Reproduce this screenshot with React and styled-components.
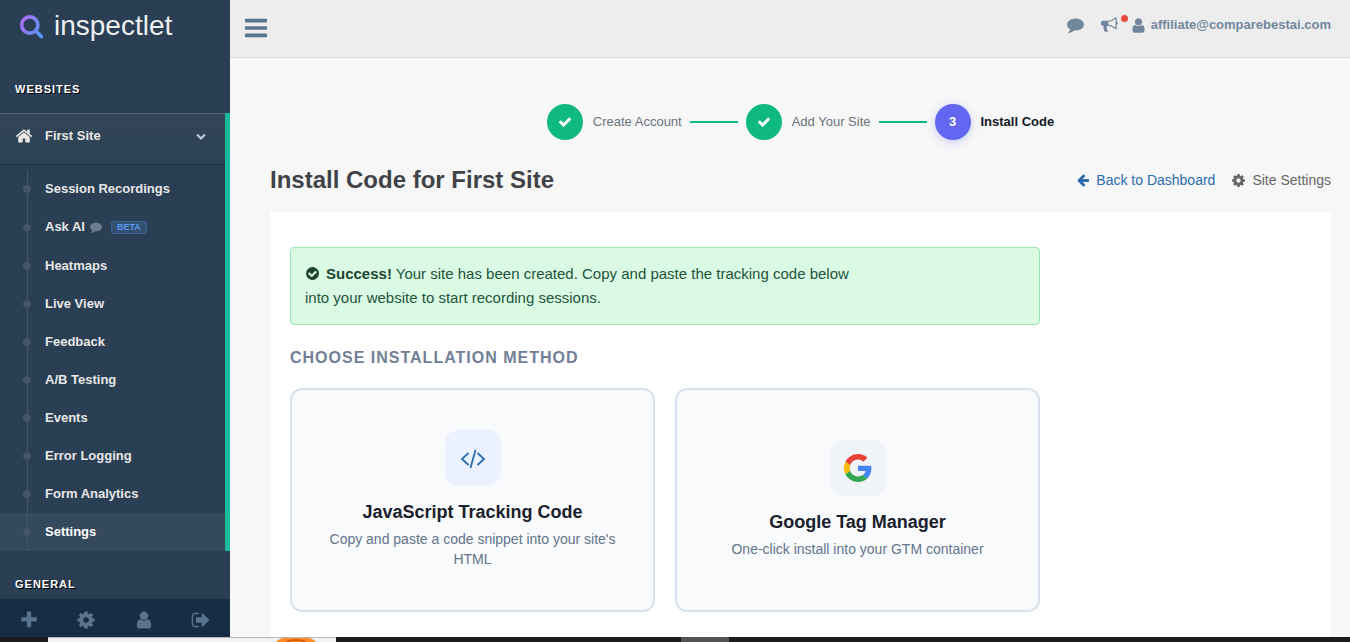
import React from 'react'
import { styled, createGlobalStyle } from 'styled-components'

const GlobalStyle = createGlobalStyle`
  *{
    box-sizing: border-box;
    margin: 0;
    padding: 0;
  }
  body{
    font-family: "Liberation Sans", Arial, sans-serif;
    font-size: 14px;
    line-height: 20px;
    background: #f7f7f7;
    color: #333;
  }
  a{
    color: inherit;
    text-decoration: none;
  }
  ul{
    list-style: none;
  }
  button{
    font: inherit;
    color: inherit;
    border: 0;
    background: none;
    cursor: pointer;
  }
`

const icons = {
  bars: 'M1664 1344v128q0 26-19 45t-45 19h-1408q-26 0-45-19t-19-45v-128q0-26 19-45t45-19h1408q26 0 45 19t19 45zm0-512v128q0 26-19 45t-45 19h-1408q-26 0-45-19t-19-45v-128q0-26 19-45t45-19h1408q26 0 45 19t19 45zm0-512v128q0 26-19 45t-45 19h-1408q-26 0-45-19t-19-45v-128q0-26 19-45t45-19h1408q26 0 45 19t19 45z',
  home: 'M1472 992v480q0 26-19 45t-45 19h-384v-384h-256v384h-384q-26 0-45-19t-19-45v-480q0-1 .5-3t.5-3l575-474 575 474q1 2 1 6zm223-69l-62 74q-8 9-21 11h-3q-13 0-21-7l-692-577-692 577q-12 8-24 7-13-2-21-11l-62-74q-8-10-7-23.5t11-21.5l719-599q32-26 76-26t76 26l244 204v-195q0-14 9-23t23-9h192q14 0 23 9t9 23v408l219 182q10 8 11 21.5t-7 23.5z',
  down: 'M1683 808l-742 741q-19 19-45 19t-45-19l-742-741q-19-19-19-45.5t19-45.5l166-165q19-19 45-19t45 19l531 531 531-531q19-19 45-19t45 19l166 165q19 19 19 45.5t-19 45.5z',
  comment: 'M1792 896q0 174-120 321.5t-326 233-450 85.5q-70 0-145-8-198 175-460 242-49 14-114 22-17 2-30.5-9t-17.5-29v-1q-3-4-.5-12t2-10 4.5-9.5l6-9 7-8.5 8-9q7-8 31-34.5t34.5-38 31-39.5 32.5-51 27-59 26-76q-157-89-247.5-220t-90.5-281q0-130 71-248.5t191-204.5 286-136.5 348-50.5q244 0 450 85.5t326 233 120 321.5z',
  bullhorn: 'M1664 640q53 0 90.5 37.5t37.5 90.5-37.5 90.5-90.5 37.5v384q0 52-38 90t-90 38q-417-347-812-380-58 19-91 66t-31 100.5 40 92.5q-20 33-23 65.5t6 58 33.5 55 48 50 61.5 50.5q-29 58-111.5 83t-168.5 11.5-132-55.5q-7-23-29.5-87.5t-32-94.5-23-89-15-101 3.5-98.5 22-110.5h-122q-66 0-113-47t-47-113v-192q0-66 47-113t113-47h480q435 0 896-384 52 0 90 38t38 90v384zm-128 604v-954q-394 302-768 343v270q377 42 768 341z',
  user: 'M1536 1399q0 109-62.5 187t-150.5 78h-854q-88 0-150.5-78t-62.5-187q0-85 8.5-160.5t31.5-152 58.5-131 94-89 134.5-34.5q131 128 313 128t313-128q76 0 134.5 34.5t94 89 58.5 131 31.5 152 8.5 160.5zm-256-887q0 159-112.5 271.5t-271.5 112.5-271.5-112.5-112.5-271.5 112.5-271.5 271.5-112.5 271.5 112.5 112.5 271.5z',
  cog: 'M1152 896q0-106-75-181t-181-75-181 75-75 181 75 181 181 75 181-75 75-181zm512-109v222q0 12-8 23t-20 13l-185 28q-19 54-39 91 35 50 107 138 10 12 10 25t-9 23q-27 37-99 108t-94 71q-12 0-26-9l-138-108q-44 23-91 38-16 136-29 186-7 28-36 28h-222q-14 0-24.5-8.5t-11.5-21.5l-28-184q-49-16-90-37l-141 107q-10 9-25 9-14 0-25-11-126-114-165-168-7-10-7-23 0-12 8-23 15-21 51-66.5t54-70.5q-27-50-41-99l-183-27q-13-2-21-12.5t-8-23.5v-222q0-12 8-23t19-13l186-28q14-46 39-92-40-57-107-138-10-12-10-24 0-10 9-23 26-36 98.5-107.5t94.5-71.5q13 0 26 10l138 107q44-23 91-38 16-136 29-186 7-28 36-28h222q14 0 24.5 8.5t11.5 21.5l28 184q49 16 90 37l142-107q9-9 24-9 13 0 25 10 129 119 165 170 7 8 7 22 0 12-8 23-15 21-51 66.5t-54 70.5q26 50 41 98l183 28q13 2 21 12.5t8 23.5z',
  plus: 'M1600 736v192q0 40-28 68t-68 28h-416v416q0 40-28 68t-68 28h-192q-40 0-68-28t-28-68v-416h-416q-40 0-68-28t-28-68v-192q0-40 28-68t68-28h416v-416q0-40 28-68t68-28h192q40 0 68 28t28 68v416h416q40 0 68 28t28 68z',
  signout: 'M704 1440q0 4 1 20t.5 26.5-3 23.5-10 19.5-20.5 6.5h-320q-119 0-203.5-84.5t-84.5-203.5v-704q0-119 84.5-203.5t203.5-84.5h320q13 0 22.5 9.5t9.5 22.5q0 4 1 20t.5 26.5-3 23.5-10 19.5-20.5 6.5h-320q-66 0-113 47t-47 113v704q0 66 47 113t113 47h312l11.5 1 11.5 3 8 5.5 7 9 2 13.5zm928-544q0 26-19 45l-544 544q-19 19-45 19t-45-19-19-45v-288h-448q-26 0-45-19t-19-45v-384q0-26 19-45t45-19h448v-288q0-26 19-45t45-19 45 19l544 544q19 19 19 45z',
  check: 'M1671 566q0 40-28 68l-724 724-136 136q-28 28-68 28t-68-28l-136-136-362-362q-28-28-28-68t28-68l136-136q28-28 68-28t68 28l294 295 656-657q28-28 68-28t68 28l136 136q28 28 28 68z',
  checkCircle: 'M1412 734q0-28-18-46l-91-90q-19-19-45-19t-45 19l-408 407-226-226q-19-19-45-19t-45 19l-91 90q-18 18-18 46 0 27 18 45l362 362q19 19 45 19 27 0 46-19l543-543q18-18 18-45zm252 162q0 209-103 385.5t-279.5 279.5-385.5 103-385.5-103-279.5-279.5-103-385.5 103-385.5 279.5-279.5 385.5-103 385.5 103 279.5 279.5 103 385.5z',
  back: 'M1664 896v128q0 53-32.5 90.5t-84.5 37.5h-704l293 294q38 36 38 90t-38 90l-75 76q-37 37-90 37-52 0-91-37l-651-652q-37-37-37-90 0-52 37-91l651-650q38-38 91-38 52 0 90 38l75 74q38 38 38 91t-38 91l-293 293h704q52 0 84.5 37.5t32.5 90.5z',
}

const Icon = ({ name, size = 14 }) => (
  <svg width={size} height={size} viewBox='0 0 1792 1792' fill='currentColor' aria-hidden='true'>
    <path d={icons[name]} />
  </svg>
)

const Screen = styled.div`
  height: 100vh;
  display: grid;
  grid-template-rows: minmax(0, 1fr) 5px;
`

const Layout = styled.div`
  display: grid;
  grid-template-columns: 230px minmax(0, 1fr);
  overflow: hidden;
`

const SidebarStyled = styled.aside`
  display: flex;
  flex-direction: column;
  min-height: 0;
  background: #2a3f54;
  color: #e6e6e6;
`

const Logo = styled.a`
  display: flex;
  align-items: center;
  gap: 10px;
  height: 52px;
  margin-bottom: 4px;
  padding: 0 19px;
  font-size: 28px;
  line-height: 52px;
  color: #ecf0f1;
  flex-shrink: 0;
`

const Menu = styled.nav`
  flex: 1;
  min-height: 0;
  overflow: hidden;
`

const MenuHeading = styled.h3`
  padding: 23px 15px 14px;
  font-size: 11px;
  line-height: 20px;
  letter-spacing: 1px;
  text-transform: uppercase;
  color: #fff;
  text-shadow: 1px 1px #000;
`

const Site = styled.div`
  border-right: 5px solid #1abb9c;
`

const SiteButton = styled.button`
  display: flex;
  align-items: center;
  gap: 12px;
  width: 100%;
  height: 52px;
  padding: 0 19px 6px 15px;
  font-size: 13px;
  font-weight: bold;
  text-align: left;
  color: #e7e7e7;
  background: linear-gradient(#334556, #2c4257);
  border-top: 1px solid #52647a;
  border-bottom: 1px solid #1c2a3a;
  span{
    flex: 1;
  }
  svg:last-child{
    color: #c4cfda;
  }
`

const SubMenu = styled.ul`
  padding-top: 5px;
`

const SubItem = styled.li`
  display: flex;
  align-items: stretch;
  height: ${(props) => (props.$tall ? 39 : 38)}px;
  background: ${(props) => (props.$active ? '#35495d' : 'transparent')};
  /* timeline line with its dot */
  &::before{
    content: '';
    width: 8px;
    margin-left: 23px;
    background:
      radial-gradient(circle closest-side, #425668 90%, transparent),
      linear-gradient(#425668, #425668) center / 1px 100% no-repeat;
  }
  a{
    display: flex;
    align-items: center;
    gap: 5px;
    padding-left: 14px;
    padding-bottom: ${(props) => (props.$tall ? 2 : 0)}px;
    font-size: 13px;
    font-weight: bold;
    color: ${(props) => (props.$active ? '#fff' : '#e7e7e7')};
  }
  svg{
    color: #6b7e92;
  }
`

const Beta = styled.span`
  margin: 2px 0 0 4px;
  padding: 0 5px;
  border: 1px solid #3b6297;
  border-radius: 2px;
  background: #34506f;
  font-size: 9px;
  line-height: 11px;
  color: #5b9cf2;
`

const SidebarFooter = styled.div`
  display: grid;
  grid-template-columns: repeat(4, 1fr);
  height: 38px;
  flex-shrink: 0;
  background: #172d44;
  button{
    display: flex;
    align-items: center;
    justify-content: center;
    padding-top: 4px;
    color: #5a738e;
  }
`

const Page = styled.div`
  min-width: 0;
  display: flex;
  flex-direction: column;
`

const TopBar = styled.header`
  display: flex;
  align-items: center;
  justify-content: space-between;
  height: 58px;
  padding: 0 19px 2px 13px;
  flex-shrink: 0;
  background: #ededed;
  border-bottom: 1px solid #d9dee4;
  color: #5a738e;
`

const MenuToggle = styled.button`
  display: flex;
`

const TopLinks = styled.div`
  display: flex;
  align-items: center;
  gap: 17px;
  height: 48px;
  align-self: flex-start;
  color: #73879c;
`

const TopButton = styled.button`
  display: flex;
  position: relative;
`

const Dot = styled.span`
  position: absolute;
  top: -1px;
  right: -10px;
  width: 7px;
  height: 7px;
  border-radius: 50%;
  background: #e74c3c;
`

const Account = styled.a`
  display: flex;
  align-items: center;
  gap: 4px;
  margin-left: -5px;
  padding-top: 2px;
  font-size: 13px;
  font-weight: bold;
`

const Main = styled.main`
  flex: 1;
  display: flex;
  flex-direction: column;
  padding: 46px 19px 0 40px;
`

const Stepper = styled.ol`
  display: flex;
  align-items: center;
  justify-content: center;
  gap: 8px;
  list-style: none;
`

const Step = styled.li`
  display: flex;
  align-items: center;
  gap: 10px;
  font-size: 13px;
  font-weight: ${(props) => (props.$current ? 'bold' : 'normal')};
  color: ${(props) => (props.$current ? '#111827' : '#6b7280')};
`

const StepCircle = styled.span`
  display: flex;
  align-items: center;
  justify-content: center;
  width: 36px;
  height: 36px;
  border-radius: 50%;
  color: #fff;
  background: ${(props) => (props.$current ? '#6366f1' : '#10b981')};
  box-shadow: ${(props) => (props.$current ? '0 2px 8px rgba(99,102,241,0.3)' : 'none')};
`

const StepLine = styled.li`
  width: 48px;
  height: 2px;
  background: #10b981;
`

const TitleRow = styled.div`
  display: flex;
  align-items: center;
  justify-content: space-between;
  padding: 24px 0 16px;
  h1{
    font-size: 24px;
    line-height: 32px;
    color: #3f4348;
  }
`

const PageLinks = styled.div`
  display: flex;
  gap: 16px;
`

const PageLink = styled.a`
  display: flex;
  align-items: center;
  gap: 6px;
  color: ${(props) => (props.$primary ? '#2b6cb0' : '#666')};
`

const Panel = styled.section`
  flex: 1;
  padding: 35px 20px 25px;
  background: #fff;
`

const Content = styled.div`
  max-width: 750px;
`

const Alert = styled.div`
  padding: 14px;
  border: 1px solid #9ae6b4;
  border-radius: 4px;
  background: #dbfae3;
  font-size: 15px;
  line-height: 24px;
  color: #22543d;
  p{
    max-width: 570px;
  }
  svg{
    margin-right: 6px;
    vertical-align: -2px;
    color: #1c4532;
  }
  strong{
    color: #1c4532;
  }
`

const SectionTitle = styled.h2`
  padding: 23px 0 20px;
  font-size: 16px;
  line-height: 20px;
  letter-spacing: 1px;
  text-transform: uppercase;
  color: #718096;
`

const Methods = styled.div`
  display: grid;
  grid-template-columns: 1fr 1fr;
  gap: 20px;
`

const MethodCard = styled.button`
  display: flex;
  flex-direction: column;
  align-items: center;
  justify-content: center;
  padding: 40px 30px;
  border: 2px solid #d9e2ec;
  border-radius: 12px;
  background: #f8fafc;
  h3{
    margin: 15px 0 6px;
    font-size: 18px;
    line-height: 22px;
    color: #1a202c;
  }
  p{
    padding-bottom: 1px;
    color: #64748b;
  }
`

const MethodIcon = styled.span`
  display: flex;
  align-items: center;
  justify-content: center;
  width: 56px;
  height: 56px;
  border-radius: 14px;
  background: ${(props) => props.$tint};
`

const Taskbar = styled.div`
  display: grid;
  grid-template-columns: 48px 288px 345px 48px 1fr;
  background: #1c1c1c;
  overflow: hidden;
`

const SearchBox = styled.div`
  padding-left: 223px;
  border-top: 1px solid #b8b8b8;
  background: #f2f2f2;
  svg{
    display: block;
  }
`

const ActiveApp = styled.div`
  grid-column: 4;
  background: #535353;
`

const subItems = ['Session Recordings', 'Ask AI', 'Heatmaps', 'Live View', 'Feedback', 'A/B Testing', 'Events', 'Error Logging', 'Form Analytics', 'Settings']

const footerItems = [
  { icon: 'plus', label: 'Add site' },
  { icon: 'cog', label: 'Settings' },
  { icon: 'user', label: 'Profile' },
  { icon: 'signout', label: 'Sign out' },
]

const LogoMark = () => (
  <svg width='25' height='25' viewBox='0 0 25 25' fill='none' stroke='url(#mark)' aria-hidden='true'>
    <defs>
      <linearGradient id='mark' x1='0' y1='6' x2='25' y2='19' gradientUnits='userSpaceOnUse'>
        <stop offset='0' stopColor='#b26bf5' />
        <stop offset='1' stopColor='#4f9cf9' />
      </linearGradient>
    </defs>
    <circle cx='10.8' cy='11' r='8.1' strokeWidth='3.6' />
    <path d='M17 17l5.200 5.500' strokeWidth='3.800' strokeLinecap='round' />
  </svg>
)

const CodeMark = () => (
  <svg width='26' height='20' viewBox='0 0 26 20' fill='none' stroke='#2b6cb0' strokeWidth='1.800' aria-hidden='true'>
    <path d='M8.500 5L2 11l6.500 6M17.500 5l6.500 6-6.500 6M15.500 2l-5 18' />
  </svg>
)

const GoogleMark = () => (
  <svg width='28' height='28' viewBox='0 0 48 48' aria-hidden='true'>
    <path fill='#EA4335' d='M24 9.500c3.540 0 6.710 1.220 9.210 3.600l6.850-6.850C35.900 2.380 30.470 0 24 0 14.620 0 6.510 5.380 2.560 13.220l7.980 6.190C12.430 13.720 17.740 9.500 24 9.500z' />
    <path fill='#4285F4' d='M46.980 24.550c0-1.570-.150-3.090-.380-4.550H24v9.020h12.940c-.580 2.960-2.260 5.480-4.780 7.180l7.730 6c4.510-4.180 7.090-10.360 7.090-17.650z' />
    <path fill='#FBBC05' d='M10.530 28.590c-.480-1.450-.760-2.990-.760-4.590s.270-3.140.760-4.590l-7.980-6.190C.920 16.460 0 20.120 0 24c0 3.880.920 7.540 2.560 10.780l7.970-6.190z' />
    <path fill='#34A853' d='M24 48c6.480 0 11.930-2.130 15.890-5.810l-7.730-6c-2.150 1.450-4.920 2.300-8.160 2.300-6.260 0-11.570-4.220-13.470-9.910l-7.980 6.190C6.510 42.620 14.620 48 24 48z' />
  </svg>
)

const Sidebar = () => (
  <SidebarStyled>
    <Logo href='#'>
      <LogoMark />
      <span>inspectlet</span>
    </Logo>
    <Menu>
      <MenuHeading>Websites</MenuHeading>
      <Site>
        <SiteButton>
          <Icon name='home' size={18} />
          <span>First Site</span>
          <Icon name='down' size={10} />
        </SiteButton>
        <SubMenu>
          {subItems.map((item) => (
            <SubItem key={item} $active={item === 'Settings'} $tall={item === 'Ask AI'}>
              <a href='#'>
                {item}
                {item === 'Ask AI' && <Icon name='comment' size={12} />}
                {item === 'Ask AI' && <Beta>BETA</Beta>}
              </a>
            </SubItem>
          ))}
        </SubMenu>
      </Site>
      <MenuHeading>General</MenuHeading>
    </Menu>
    <SidebarFooter>
      {footerItems.map((item) => (
        <button key={item.icon} aria-label={item.label}>
          <Icon name={item.icon} size={20} />
        </button>
      ))}
    </SidebarFooter>
  </SidebarStyled>
)

const App = () => {
  return (
    <Screen>
      <GlobalStyle />
      <Layout>
        <Sidebar />
        <Page>
          <TopBar>
            <MenuToggle aria-label='Toggle menu'>
              <Icon name='bars' size={26} />
            </MenuToggle>
            <TopLinks>
              <TopButton aria-label='Chat'><Icon name='comment' size={17} /></TopButton>
              <TopButton aria-label='News'><Icon name='bullhorn' size={17} /><Dot /></TopButton>
              <Account href='#'>
                <Icon name='user' size={17} />
                affiliate@comparebestai.com
              </Account>
            </TopLinks>
          </TopBar>
          <Main>
            <Stepper>
              <Step><StepCircle><Icon name='check' /></StepCircle>Create Account</Step>
              <StepLine aria-hidden='true' />
              <Step><StepCircle><Icon name='check' /></StepCircle>Add Your Site</Step>
              <StepLine aria-hidden='true' />
              <Step $current><StepCircle $current>3</StepCircle>Install Code</Step>
            </Stepper>
            <TitleRow>
              <h1>Install Code for First Site</h1>
              <PageLinks>
                <PageLink href='#' $primary><Icon name='back' />Back to Dashboard</PageLink>
                <PageLink href='#'><Icon name='cog' size={15} />Site Settings</PageLink>
              </PageLinks>
            </TitleRow>
            <Panel>
              <Content>
                <Alert role='status'>
                  <p>
                    <Icon name='checkCircle' size={15} />
                    <strong>Success!</strong> Your site has been created. Copy and paste the tracking code below into your website to start recording sessions.
                  </p>
                </Alert>
                <SectionTitle>Choose Installation Method</SectionTitle>
                <Methods>
                  <MethodCard>
                    <MethodIcon $tint='#ebf1fe'><CodeMark /></MethodIcon>
                    <h3>JavaScript Tracking Code</h3>
                    <p>Copy and paste a code snippet into your site's HTML</p>
                  </MethodCard>
                  <MethodCard>
                    <MethodIcon $tint='#f0f3f8'><GoogleMark /></MethodIcon>
                    <h3>Google Tag Manager</h3>
                    <p>One-click install into your GTM container</p>
                  </MethodCard>
                </Methods>
              </Content>
            </Panel>
          </Main>
        </Page>
      </Layout>
      <Taskbar>
        <div />
        <SearchBox>
          <svg width='50' height='5' viewBox='0 0 50 5' aria-hidden='true'>
            <circle cx='25' cy='30' r='33' fill='#ff8a24' />
            <circle cx='25' cy='24' r='22' fill='none' stroke='#dc5a10' strokeWidth='2' />
          </svg>
        </SearchBox>
        <ActiveApp />
      </Taskbar>
    </Screen>
  )
}

export default App
